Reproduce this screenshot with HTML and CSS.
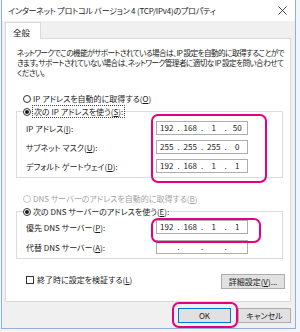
FILE: index.html
```html
<!DOCTYPE html>
<html lang="ja">
<head>
    <meta charset="UTF-8">
    <meta name="viewport" content="width=device-width, initial-scale=1.0">
    <title>インターネット プロトコル バージョン 4 (TCP/IPv4)のプロパティ</title>
    <link rel="stylesheet" href="styles.css">
</head>
<body>
    <div class="window">
        <div class="titlebar">
            <span class="title">インターネット プロトコル バージョン 4 (TCP/IPv4)のプロパティ</span>
            <svg class="close" width="9" height="9" viewBox="0 0 9 9">
                <path d="M0.5 0.5 L8.5 8.5 M8.5 0.5 L0.5 8.5" stroke="#333" stroke-width="0.9" fill="none"/>
            </svg>
        </div>

        <div class="content">
            <div class="tabs">
                <div class="tab">全般</div>
            </div>

            <div class="panel">
                <p class="intro">ネットワークでこの機能がサポートされている場合は、IP 設定を自動的に取得することがで<br>きます。サポートされていない場合は、ネットワーク管理者に適切な IP 設定を問い合わせて<br>ください。</p>

                <div class="radio-row">
                    <span class="radio"></span>
                    <span>IP アドレスを自動的に取得する(<u>O</u>)</span>
                </div>

                <fieldset class="group">
                    <legend class="radio-row">
                        <span class="radio checked"></span>
                        <span class="focus">次の IP アドレスを使う(<u>S</u>):</span>
                    </legend>
                    <div class="fields">
                        <span>IP アドレス(<u>I</u>):</span>
                        <div class="ip">
                            <span>192</span><i>.</i><span>168</span><i>.</i><span>1</span><i>.</i><span>50</span>
                        </div>
                        <span>サブネット マスク(<u>U</u>):</span>
                        <div class="ip">
                            <span>255</span><i>.</i><span>255</span><i>.</i><span>255</span><i>.</i><span>0</span>
                        </div>
                        <span>デフォルト ゲートウェイ(<u>D</u>):</span>
                        <div class="ip">
                            <span>192</span><i>.</i><span>168</span><i>.</i><span>1</span><i>.</i><span>1</span>
                        </div>
                    </div>
                </fieldset>

                <div class="radio-row disabled dns-auto">
                    <span class="radio"></span>
                    <span>DNS サーバーのアドレスを自動的に取得する(<u>B</u>)</span>
                </div>

                <fieldset class="group">
                    <legend class="radio-row">
                        <span class="radio checked"></span>
                        <span>次の DNS サーバーのアドレスを使う(<u>E</u>):</span>
                    </legend>
                    <div class="fields dns">
                        <span>優先 DNS サーバー(<u>P</u>):</span>
                        <div class="ip">
                            <span>192</span><i>.</i><span>168</span><i>.</i><span>1</span><i>.</i><span>1</span>
                        </div>
                        <span>代替 DNS サーバー(<u>A</u>):</span>
                        <div class="ip">
                            <span></span><i>.</i><span></span><i>.</i><span></span><i>.</i><span></span>
                        </div>
                    </div>
                </fieldset>

                <div class="panel-footer">
                    <div class="check-row">
                        <span class="checkbox"></span>
                        <span>終了時に設定を検証する(<u>L</u>)</span>
                    </div>
                    <button class="btn advanced">詳細設定(<u>V</u>)...</button>
                </div>
            </div>

            <div class="dialog-buttons">
                <button class="btn default">OK</button>
                <button class="btn">キャンセル</button>
            </div>
        </div>

        <!-- 強調の枠 -->
        <div class="mark mark-ip"></div>
        <div class="mark mark-dns"></div>
        <div class="mark mark-ok"></div>
    </div>
</body>
</html>
```

FILE: styles.css
```css
body {
    margin: 0;
    background: #f3f5f8;
    font-family: "Noto Sans CJK JP", "Noto Sans", sans-serif;
    font-feature-settings: "palt";
    font-size: 8px;
    color: #1a1a1a;
}

u {
    text-decoration-thickness: 0.6px;
    text-underline-offset: 1px;
}

.window {
    position: relative;
    box-sizing: border-box;
    width: 295px;
    height: 329px;
    margin-left: 1px;
    border: 1px solid #8db1da;
    border-top: none;
    background: #f0f0f0;
    display: flex;
    flex-direction: column;
}

.titlebar {
    height: 21px;
    background: #ffffff;
    display: flex;
    align-items: center;
    justify-content: space-between;
    padding: 0 6px 0 6px;
}

.title {
    font-size: 8px;
    letter-spacing: -0.2px;
    color: #222;
}

.close {
    margin-right: 2px;
}

.content {
    flex: 1;
    padding: 1px 4px 0 3px;
    display: flex;
    flex-direction: column;
}

.tabs {
    display: flex;
}

.tab {
    box-sizing: border-box;
    width: 36px;
    height: 17px;
    background: #ffffff;
    border: 1px solid #d9d9d9;
    border-bottom: none;
    padding: 3px 0 0 7px;
    font-size: 8.5px;
    position: relative;
    z-index: 1;
    margin-bottom: -1px;
}

.panel {
    box-sizing: border-box;
    height: 264px;
    background: #ffffff;
    border: 1px solid #d9d9d9;
    padding: 0 7px 0 10px;
}

.intro {
    margin: 9px 0 0 1px;
    font-size: 7.6px;
    letter-spacing: -0.55px;
    line-height: 10px;
    white-space: nowrap;
}

.radio-row {
    display: flex;
    align-items: center;
    gap: 2px;
    height: 11px;
}

.panel > .radio-row {
    margin: 15px 0 0 7px;
}

.radio {
    box-sizing: border-box;
    width: 8px;
    height: 8px;
    border: 1px solid #333;
    border-radius: 50%;
    background: #fff;
    display: flex;
    align-items: center;
    justify-content: center;
}

.radio.checked::after {
    content: "";
    width: 4px;
    height: 4px;
    border-radius: 50%;
    background: #1a1a1a;
}

.disabled {
    color: #a3a3a3;
}

.disabled .radio {
    border-color: #c4c4c4;
}

.focus {
    outline: 1px dotted #444;
    outline-offset: 0;
    padding: 0 1px;
}

.group {
    margin: 2px 0 0 0;
    border: 1px solid #dcdcdc;
    padding: 0 9px 4px 9px;
    min-width: 0;
}

.group legend {
    padding: 0 1px 0 0;
    margin-left: -3px;
    height: 11px;
}

.fields {
    display: grid;
    grid-template-columns: 130px 92px;
    grid-auto-rows: 14px;
    row-gap: 5px;
    align-items: center;
    padding-top: 4px;
}

.fields.dns {
    padding-top: 3px;
    row-gap: 6px;
}

.ip {
    box-sizing: border-box;
    height: 14px;
    border: 1px solid #adadad;
    background: #fff;
    display: grid;
    grid-template-columns: 1fr 4px 1fr 4px 1fr 4px 1fr;
    align-items: center;
    text-align: center;
    font-size: 8px;
    line-height: 12px;
}

.ip i {
    font-style: normal;
}

.dns-auto {
    margin: 8px 0 2px 7px;
}

.panel-footer {
    display: flex;
    justify-content: space-between;
    align-items: flex-start;
    margin: 7px 0 0 10px;
}

.check-row {
    display: flex;
    align-items: center;
    gap: 3px;
    margin-top: 8px;
}

.checkbox {
    box-sizing: border-box;
    width: 8px;
    height: 8px;
    border: 1px solid #333;
    background: #fff;
}

.btn {
    box-sizing: border-box;
    height: 15px;
    background: #e1e1e1;
    border: 1px solid #adadad;
    font-family: inherit;
    font-feature-settings: "palt";
    font-size: 8px;
    color: #1a1a1a;
    padding: 0;
    line-height: 12px;
}

.advanced {
    width: 64px;
    margin-top: 8px;
    margin-right: -2px;
}

.dialog-buttons {
    display: flex;
    justify-content: flex-end;
    gap: 7px;
    margin-top: 6px;
}

.dialog-buttons .btn {
    width: 53px;
}

.dialog-buttons .default {
    border-color: #0078d7;
}

.mark {
    position: absolute;
    box-sizing: border-box;
    border: 2px solid #e4007f;
    border-radius: 7px;
}

.mark-ip {
    left: 149px;
    top: 114px;
    width: 116px;
    height: 69px;
}

.mark-dns {
    left: 149px;
    top: 218px;
    width: 110px;
    height: 25px;
}

.mark-ok {
    left: 170px;
    top: 302px;
    width: 66px;
    height: 26px;
}
```
